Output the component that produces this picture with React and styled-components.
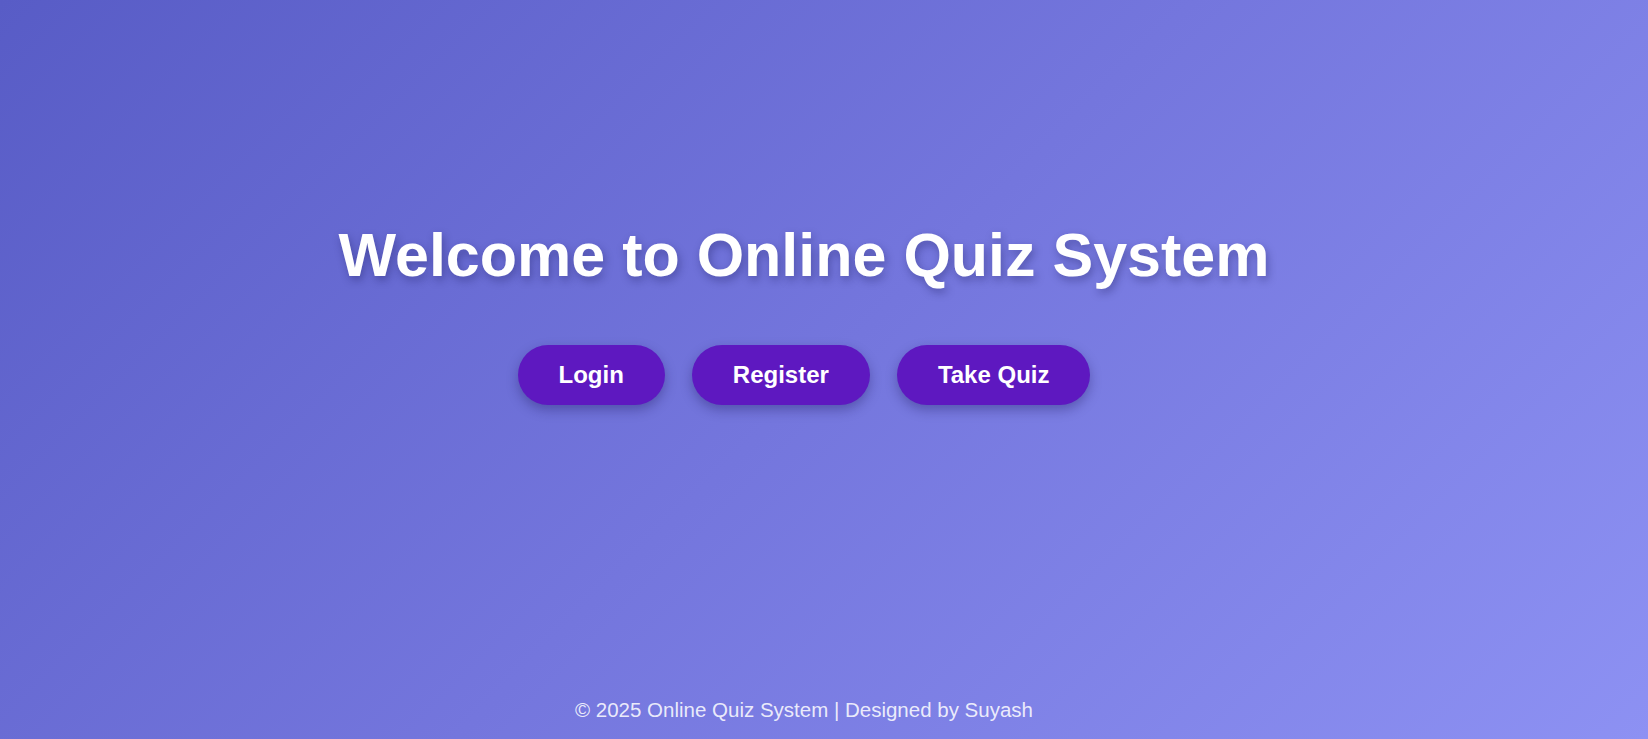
import styled, { createGlobalStyle } from "styled-components";

const GlobalStyle = createGlobalStyle`
  html, body {
    margin: 0;
    padding: 0;
  }
  body {
    font-family: "Liberation Sans", Arial, sans-serif;
  }
`;

const Page = styled.div`
  min-height: 100vh;
  box-sizing: border-box;
  display: flex;
  flex-direction: column;
  align-items: center;
  padding-right: 40px;
  background: linear-gradient(135deg, #585cc6 0%, #7476dd 50%, #8d91f3 100%);
`;

const Hero = styled.main`
  flex: 1;
  display: flex;
  flex-direction: column;
  align-items: center;
  padding-top: 220px;
`;

const Title = styled.h1`
  margin: 0;
  font-size: 61px;
  font-weight: 700;
  color: #ffffff;
  text-shadow: 2px 4px 8px rgba(20, 20, 80, 0.35);
`;

const ButtonRow = styled.div`
  display: flex;
  gap: 27px;
  margin-top: 55px;
`;

const NavButton = styled.a`
  display: inline-block;
  padding: 16px 41px;
  border-radius: 30px;
  background: #5e18c0;
  color: #ffffff;
  font-size: 24px;
  font-weight: 700;
  text-decoration: none;
  box-shadow: 0 5px 12px rgba(30, 20, 90, 0.35);
  cursor: pointer;
`;

const Footer = styled.footer`
  padding-bottom: 17px;
  font-size: 20.5px;
  color: rgba(255, 255, 255, 0.86);
`;

function App() {
  return (
    <Page>
      <GlobalStyle />
      <Hero>
        <Title>Welcome to Online Quiz System</Title>
        <ButtonRow>
          <NavButton>Login</NavButton>
          <NavButton>Register</NavButton>
          <NavButton>Take Quiz</NavButton>
        </ButtonRow>
      </Hero>
      <Footer>© 2025 Online Quiz System | Designed by Suyash</Footer>
    </Page>
  );
}

export default App;
